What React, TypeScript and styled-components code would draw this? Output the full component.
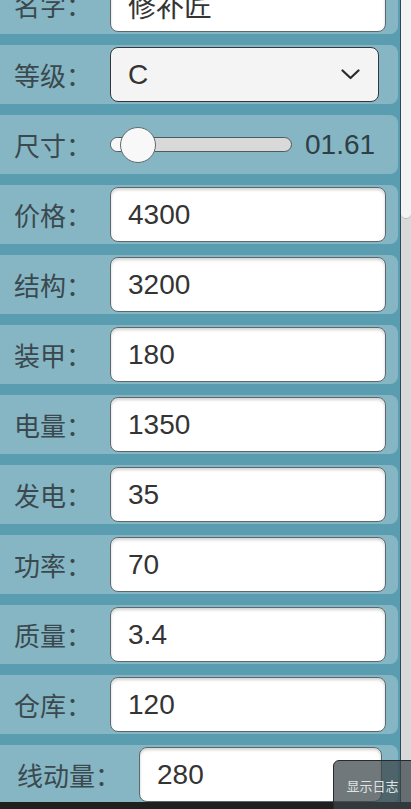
import React from "react";
import styled, { createGlobalStyle } from "styled-components";

const GlobalStyle = createGlobalStyle`
  html, body {
    margin: 0;
    padding: 0;
    background: #1e1e1e;
    overflow: hidden;
  }
  * {
    box-sizing: border-box;
  }
`;

const Screen = styled.div`
  position: relative;
  width: 411px;
  height: 809px;
  display: flex;
  flex-direction: column;
  overflow: hidden;
  font-family: "Liberation Sans", "Noto Sans CJK SC", sans-serif;
`;

const Viewport = styled.div`
  display: flex;
  height: 802px;
`;

const Panel = styled.div`
  width: 401px;
  height: 100%;
  background: #5a9db0;
  border-right: 1px solid #2c4a54;
  overflow: hidden;
`;

const List = styled.div`
  display: flex;
  flex-direction: column;
  gap: 11px;
  margin: -25px 2px 0 -10px;
`;

const Row = styled.div<{ $left?: number; $right?: number }>`
  height: 59px;
  display: flex;
  align-items: center;
  padding-left: ${(p) => p.$left ?? 24}px;
  padding-right: ${(p) => p.$right ?? 12}px;
  background: #86b6c3;
  border-radius: 8px;
`;

const Label = styled.span`
  flex: none;
  margin-right: 18px;
  font-family: "Noto Sans CJK SC", sans-serif;
  font-size: 26px;
  color: #3a494f;
  white-space: nowrap;
`;

const Field = styled.input`
  flex: 1;
  min-width: 0;
  height: 55px;
  padding: 0 17px;
  border: 1px solid #5d686c;
  border-radius: 8px;
  background: #ffffff;
  box-shadow: inset 0 2px 3px rgba(0, 0, 0, 0.18);
  font-family: "Liberation Sans", "Noto Sans CJK SC", sans-serif;
  font-size: 28px;
  color: #343434;
  outline: none;
`;

const SelectBox = styled.div`
  flex: 1;
  height: 55px;
  display: flex;
  align-items: center;
  justify-content: space-between;
  padding: 0 18px 0 17px;
  border: 1px solid #33393b;
  border-radius: 8px;
  background: #f4f4f4;
  font-size: 28px;
  color: #333333;
`;

const Track = styled.div`
  position: relative;
  width: 182px;
  height: 15px;
  flex: none;
  border: 1px solid #4f5a5e;
  border-radius: 8px;
  background: #d9d9d9;
`;

const TrackFill = styled.div`
  position: absolute;
  left: 0;
  top: 0;
  bottom: 0;
  border-radius: 8px 0 0 8px;
  background: #f7f7f7;
`;

const Thumb = styled.div`
  position: absolute;
  top: 50%;
  width: 36px;
  height: 36px;
  margin-left: -18px;
  transform: translateY(-50%);
  border: 1px solid #5f6a6e;
  border-radius: 50%;
  background: #f8f8f8;
`;

const SliderValue = styled.span`
  margin-left: 13px;
  font-size: 28px;
  color: #2e3f46;
`;

const Scrollbar = styled.div`
  width: 10px;
  height: 100%;
  background: #d9d9d9;
`;

const ScrollThumb = styled.div`
  height: 219px;
  background: #f3f3f3;
  border-bottom: 1px solid #b5b5b5;
  border-radius: 0 0 6px 6px;
`;

const BottomBar = styled.div`
  height: 7px;
  background: #1f1f1f;
`;

const LogToggle = styled.button`
  position: absolute;
  right: -1px;
  bottom: -1px;
  width: 79px;
  height: 50px;
  display: flex;
  align-items: center;
  justify-content: center;
  border: 1px solid #262b2d;
  border-radius: 6px 0 0 0;
  background: rgba(58, 68, 72, 0.72);
  color: #dfe4e6;
  font-family: "Noto Sans CJK SC", sans-serif;
  font-size: 13px;
  padding: 0;
`;

const fields = [
  { label: "价格", value: "4300" },
  { label: "结构", value: "3200" },
  { label: "装甲", value: "180" },
  { label: "电量", value: "1350" },
  { label: "发电", value: "35" },
  { label: "功率", value: "70" },
  { label: "质量", value: "3.4" },
  { label: "仓库", value: "120" },
];

function Chevron() {
  return (
    <svg width="19" height="11" viewBox="0 0 19 11" fill="none">
      <path
        d="M1.5 1.5 L9.5 9 L17.5 1.5"
        stroke="#2a2a2a"
        strokeWidth="2.2"
        strokeLinecap="round"
        strokeLinejoin="round"
      />
    </svg>
  );
}

export default function App() {
  const size = 0.15;

  return (
    <Screen>
      <GlobalStyle />
      <Viewport>
        <Panel>
          <List>
            <Row>
              <Label>名字：</Label>
              <Field readOnly value="修补匠" />
            </Row>
            <Row $right={19}>
              <Label>等级：</Label>
              <SelectBox>
                <span>C</span>
                <Chevron />
              </SelectBox>
            </Row>
            <Row>
              <Label>尺寸：</Label>
              <Track>
                <TrackFill style={{ width: `${size * 100}%` }} />
                <Thumb style={{ left: `${size * 100}%` }} />
              </Track>
              <SliderValue>01.61</SliderValue>
            </Row>
            {fields.map((f) => (
              <Row key={f.label}>
                <Label>{f.label}：</Label>
                <Field readOnly value={f.value} />
              </Row>
            ))}
            <Row $left={27} $right={16}>
              <Label>线动量：</Label>
              <Field readOnly value="280" />
            </Row>
          </List>
        </Panel>
        <Scrollbar>
          <ScrollThumb />
        </Scrollbar>
      </Viewport>
      <BottomBar />
      <LogToggle>显示日志</LogToggle>
    </Screen>
  );
}
